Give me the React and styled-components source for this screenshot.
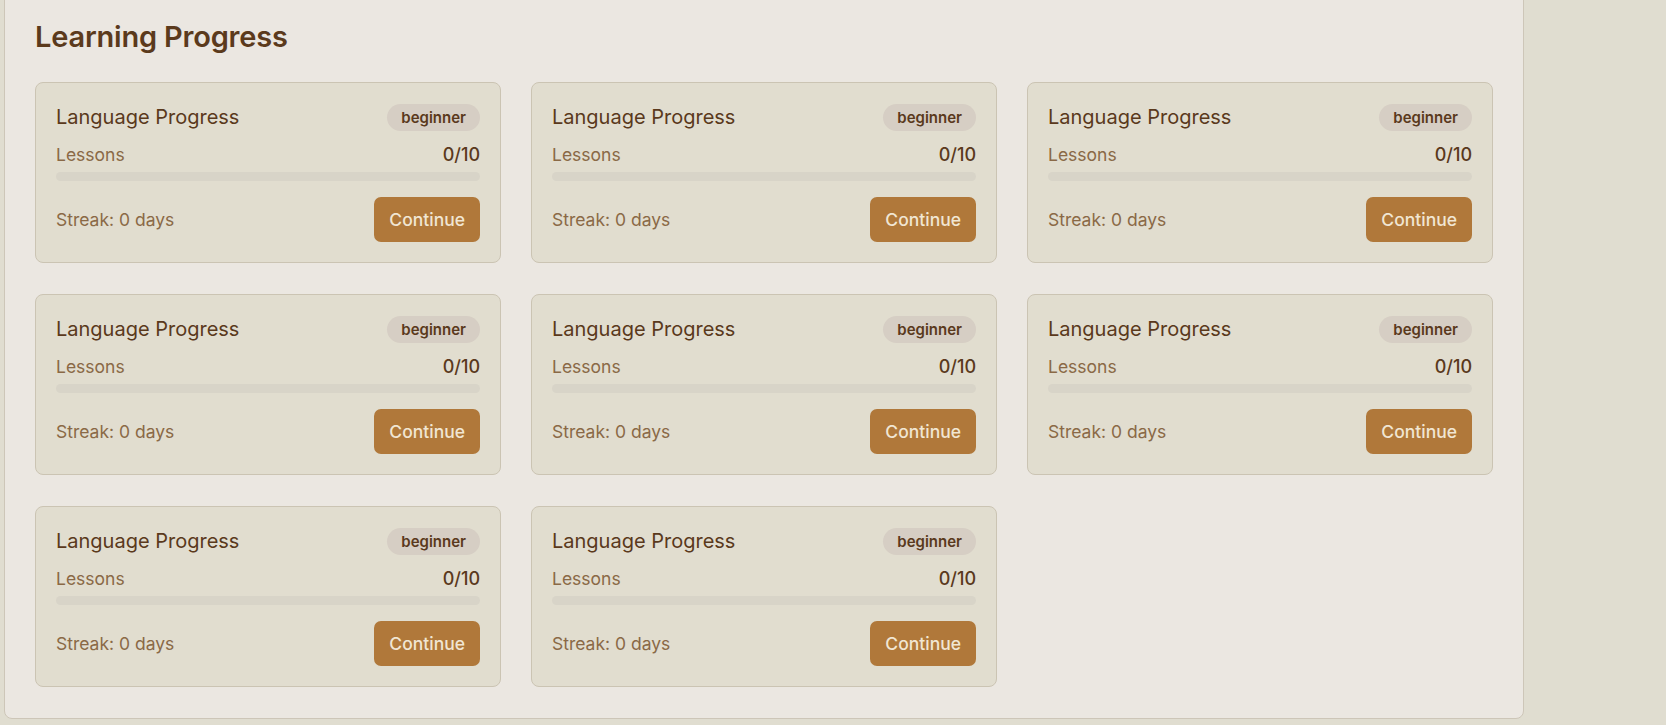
import React from 'react';
import styled, { createGlobalStyle } from 'styled-components';

const GlobalStyle = createGlobalStyle`
  * { box-sizing: border-box; }
  html, body {
    margin: 0;
    background: #e0ddd0;
    font-family: Inter, "Noto Sans", sans-serif;
    overflow: hidden;
  }
`;

const Page = styled.div`
  display: flex;
  align-items: flex-start;
  padding: 0 0 8px 4px;
  min-height: 100vh;
`;

const Panel = styled.section`
  width: 1520px;
  margin-top: -12px;
  padding: 30px 30px 31px;
  background: #ebe7e1;
  border: 1px solid #cdc6b8;
  border-radius: 8px;
`;

const Heading = styled.h2`
  margin: 0 0 27px;
  font-size: 29px;
  line-height: 36px;
  font-weight: 600;
  letter-spacing: -0.2px;
  color: #5b3a1c;
`;

const Grid = styled.div`
  display: grid;
  grid-template-columns: repeat(3, 1fr);
  gap: 31px 30px;
`;

const Card = styled.div`
  display: flex;
  flex-direction: column;
  padding: 19px 20px 20px;
  background: #e1ddcf;
  border: 1px solid #cbc4b3;
  border-radius: 8px;
`;

const Header = styled.div`
  display: flex;
  justify-content: space-between;
  align-items: center;
  height: 30px;
  margin-bottom: 9px;
`;

const Title = styled.h3`
  margin: 0;
  font-size: 20px;
  line-height: 28px;
  font-weight: 400;
  color: #5a391c;
`;

const Badge = styled.span`
  padding: 3px 14px;
  border-radius: 999px;
  background: #d6cec4;
  color: #5a391c;
  font-size: 15px;
  line-height: 21px;
  font-weight: 600;
`;

const Row = styled.div`
  display: flex;
  justify-content: space-between;
  align-items: center;
  font-size: 17.5px;
  line-height: 27px;
`;

const Muted = styled.span`
  color: #8a6946;
`;

const Count = styled.span`
  color: #5a391c;
  font-weight: 500;
  font-size: 18px;
`;

const Bar = styled.div`
  height: 9px;
  margin-top: 4px;
  border-radius: 999px;
  background: #d8d4c8;
  overflow: hidden;
`;

const Fill = styled.div`
  height: 100%;
  background: #b0783a;
`;

const Footer = styled(Row)`
  margin-top: 16px;
`;

const Button = styled.button`
  padding: 10px 15px;
  border: none;
  border-radius: 7px;
  background: #b0783a;
  color: #f1e6d3;
  font-family: inherit;
  font-size: 17.5px;
  line-height: 25px;
  font-weight: 500;
  cursor: pointer;
`;

const courses = Array.from({ length: 8 }, (_, i) => ({
  id: i,
  title: 'Language Progress',
  level: 'beginner',
  done: 0,
  total: 10,
  streak: 0,
}));

function ProgressCard({ course }) {
  const pct = (course.done / course.total) * 100;
  return (
    <Card>
      <Header>
        <Title>{course.title}</Title>
        <Badge>{course.level}</Badge>
      </Header>
      <Row>
        <Muted>Lessons</Muted>
        <Count>{course.done}/{course.total}</Count>
      </Row>
      <Bar>
        <Fill style={{ width: `${pct}%` }} />
      </Bar>
      <Footer>
        <Muted>Streak: {course.streak} days</Muted>
        <Button>Continue</Button>
      </Footer>
    </Card>
  );
}

export default function App() {
  return (
    <Page>
      <GlobalStyle />
      <Panel>
        <Heading>Learning Progress</Heading>
        <Grid>
          {courses.map((c) => (
            <ProgressCard key={c.id} course={c} />
          ))}
        </Grid>
      </Panel>
    </Page>
  );
}
